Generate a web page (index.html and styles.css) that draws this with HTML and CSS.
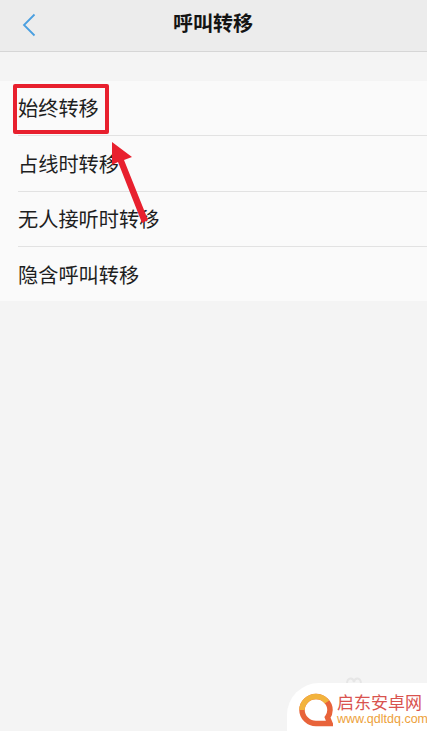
FILE: index.html
```html
<!DOCTYPE html>
<html lang="zh-CN">
<head>
    <meta charset="UTF-8">
    <meta name="viewport" content="width=device-width, initial-scale=1.0">
    <title>呼叫转移</title>
    <link rel="stylesheet" href="styles.css">
</head>
<body>
    <div class="header">
        <svg class="back" width="14" height="24" viewBox="0 0 14 24">
            <path d="M12.5 1.5 L2 12 L12.5 22.5" fill="none" stroke="#4a9fe0" stroke-width="1.8"/>
        </svg>
        <h1>呼叫转移</h1>
    </div>

    <div class="list">
        <div class="row">始终转移</div>
        <div class="row">占线时转移</div>
        <div class="row">无人接听时转移</div>
        <div class="row">隐含呼叫转移</div>
    </div>

    <!-- red annotation on top of the list -->
    <div class="mark-box"></div>
    <svg class="mark-arrow" width="50" height="90" viewBox="0 0 50 90">
        <polygon points="2,1 22,16 14,19 38,79 32,82 8,21 2,24" fill="#e8202e"/>
    </svg>

    <svg class="wm-bump" width="18" height="8" viewBox="0 0 18 8">
        <path d="M2 8 C2 1 8 1 9 6 C10 1 16 1 16 8" fill="none" stroke="#e6e6e6" stroke-width="2"/>
    </svg>
    <div class="watermark">
        <svg class="wm-logo" width="34" height="34" viewBox="0 0 34 34">
            <path d="M17 3.500 C9.500 3.500 3 9.500 3 17 C3 24.500 9.500 30.500 17 30.500 L31 30.500 L28.500 24.500 C30 22.500 31 20 31 17 C31 9.500 24.500 3.500 17 3.500 Z" fill="none" stroke="#e8633a" stroke-width="5.500"/>
            <path d="M3 17 C3 9.500 9.500 3.500 17 3.500 C21.500 3.500 25.500 5.500 28 9" fill="none" stroke="#f2b33d" stroke-width="5.500"/>
        </svg>
        <div class="wm-text">
            <div class="wm-name">启东安卓网</div>
            <div class="wm-url">www.qdltdq.com</div>
        </div>
    </div>
</body>
</html>
```

FILE: styles.css
```css
html, body {
    height: 100%;
}
body {
    font-family: "Noto Sans CJK SC", "Liberation Sans", sans-serif;
    background-color: #f4f4f4;
    margin: 0;
    position: relative;
    overflow: hidden;
    color: #1e1e1e;
}
.header {
    height: 51px;
    background-color: #ececec;
    border-bottom: 1px solid #d6d6d6;
    display: flex;
    align-items: center;
    justify-content: center;
    position: relative;
}
.header h1 {
    margin: 0;
    font-size: 20px;
    font-weight: 700;
    color: #141414;
    position: relative;
    top: -3px;
    left: -0.5px;
}
.back {
    position: absolute;
    left: 22px;
    top: 13px;
}
.list {
    margin-top: 29px;
    background-color: #fafafa;
}
.row {
    height: 55px;
    line-height: 55px;
    margin-left: 18px;
    font-size: 20.2px;
    border-bottom: 1px solid #e2e2e2;
    box-sizing: border-box;
}
.row:first-child {
    line-height: 53px;
}
.row:nth-child(2) {
    height: 56px;
}
.row:nth-child(3) {
    line-height: 53px;
}
.row:last-child {
    height: 54px;
    border-bottom: none;
}
.mark-box {
    position: absolute;
    left: 13px;
    top: 84px;
    width: 96px;
    height: 50px;
    box-sizing: border-box;
    border: 4px solid #e8202e;
    border-radius: 2px;
}
.mark-arrow {
    position: absolute;
    left: 110px;
    top: 141px;
}
.wm-bump {
    position: absolute;
    left: 345px;
    top: 676px;
}
.watermark {
    position: absolute;
    right: 0;
    bottom: 0;
    width: 140px;
    height: 48px;
    background-color: #fff;
    border-top-left-radius: 32px;
    display: flex;
    align-items: center;
    gap: 4px;
    padding-left: 12px;
    box-sizing: border-box;
}
.wm-logo {
    flex-shrink: 0;
    margin-top: 5px;
}
.wm-text {
    margin-top: 4px;
}
.wm-name {
    font-size: 17px;
    line-height: 20px;
    color: #d9534f;
}
.wm-url {
    font-family: "Liberation Sans", sans-serif;
    font-size: 12.500px;
    line-height: 14px;
    color: #eda13a;
}
```
